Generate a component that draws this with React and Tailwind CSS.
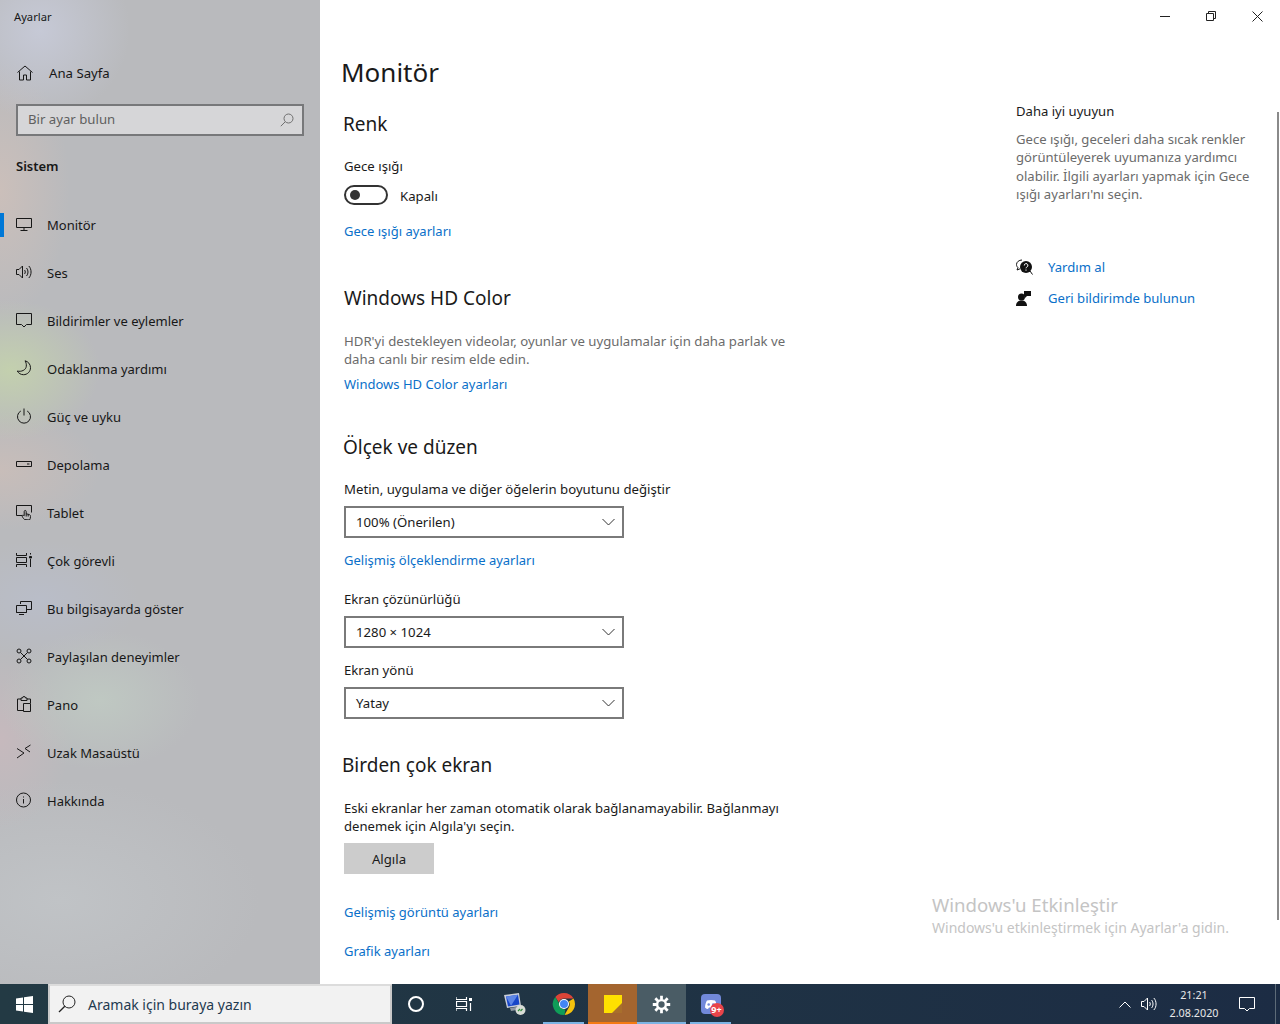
import React from 'react';

const Svg = ({ size = 16, className = '', children }) => (
  <svg width={size} height={size} viewBox="0 0 16 16" fill="none" stroke="currentColor" strokeWidth="1" className={className}>
    {children}
  </svg>
);

const navIcons = {
  monitor: (
    <Svg>
      <path d="M.5 2.500h15v9H.5zM8 11.500v3M4.500 14.500h7" />
    </Svg>
  ),
  sound: (
    <Svg>
      <path d="M.5 5.500h2.500L6.500 2v12L3 10.500H.5zM8.500 6c1 1 1 3 0 4M10.500 4c2 2 2 6 0 8M12.800 2c3 3 3 9 0 12" />
    </Svg>
  ),
  notify: (
    <Svg>
      <path d="M.5 1.500h15v11h-5L8 15l-2.500-2.500h-5z" />
    </Svg>
  ),
  moon: (
    <Svg>
      <path d="M9 .8c3 .6 5.500 3.400 5.500 6.900 0 4-3.200 7-7 7-2.700 0-5-1.400-6.200-3.700 4 1.100 8.700-.9 9-4.800.2-2-.2-3.800-1.300-5.400z" />
    </Svg>
  ),
  power: (
    <Svg>
      <path d="M8 .5v7M4.800 3a6.500 6.500 0 1 0 6.400 0" />
    </Svg>
  ),
  storage: (
    <Svg>
      <path d="M.5 5.500h15v5H.5z" />
      <path d="M11 8h2.500" />
    </Svg>
  ),
  tablet: (
    <Svg>
      <path d="M6 11.500H.5v-10h15v7" />
      <path d="M8.500 15.500c-1-1-2.300-2.500-2.300-3.500s1-1 2-.2V7.500c0-1.400 2-1.400 2 0v2.300l3 .7c1 .3 1.300 1 1.300 2 0 1.500-.3 2.500-1 3.500zM10.200 9.500v3M12.200 10.200v2.300" />
    </Svg>
  ),
  multi: (
    <Svg>
      <path d="M.5 1v2.500h10V1M.5 5.500h10v5H.5zM.5 15v-2.500h10V15M14.500 1v1.500M14.500 7v8" />
      <path d="M13.500 4.500h2v1.500h-2z" fill="currentColor" />
    </Svg>
  ),
  project: (
    <Svg>
      <path d="M4.500 4V1.500h11v8H11M.5 5.500h10v7H.5zM.5 12.500h10M3 14.500h5" />
    </Svg>
  ),
  shared: (
    <Svg>
      <circle cx="3" cy="3" r="2" />
      <circle cx="13" cy="3" r="2" />
      <circle cx="3" cy="13" r="2" />
      <circle cx="13" cy="13" r="2" />
      <path d="M4.500 4.500l7 7M11.500 4.500l-7 7" />
    </Svg>
  ),
  clipboard: (
    <Svg>
      <path d="M5 3H1.500v11.500H7M11 3h3.500v4M5 4.500V2h1.500a1.500 1.500 0 0 1 3 0H11v2.500zM7.500 7.500h7v8h-7z" />
    </Svg>
  ),
  remote: (
    <Svg>
      <path d="M1 4.500l7 4.500-7 5M14.500 1L9 4.500l5 3.500" />
    </Svg>
  ),
  info: (
    <Svg>
      <circle cx="7.500" cy="8" r="7" />
      <path d="M7.500 7v4.500M7.500 4.500v1" />
    </Svg>
  ),
};

const navItems = [
  ['monitor', 'Monitör'],
  ['sound', 'Ses'],
  ['notify', 'Bildirimler ve eylemler'],
  ['moon', 'Odaklanma yardımı'],
  ['power', 'Güç ve uyku'],
  ['storage', 'Depolama'],
  ['tablet', 'Tablet'],
  ['multi', 'Çok görevli'],
  ['project', 'Bu bilgisayarda göster'],
  ['shared', 'Paylaşılan deneyimler'],
  ['clipboard', 'Pano'],
  ['remote', 'Uzak Masaüstü'],
  ['info', 'Hakkında'],
];

function Sidebar() {
  return (
    <aside className="w-[320px] shrink-0 text-[#171717] bg-[#b9babd] bg-[radial-gradient(circle_at_40px_30px,#c6c9d6_0,transparent_90px),radial-gradient(ellipse_70px_130px_at_0px_190px,#cbbfba_0,transparent_100%),radial-gradient(ellipse_90px_70px_at_10px_370px,#c3d0ae_0,transparent_100%),radial-gradient(ellipse_100px_60px_at_0px_470px,#c8bdb9_0,transparent_100%),radial-gradient(ellipse_100px_60px_at_40px_600px,#b9bdc8_0,transparent_100%),radial-gradient(ellipse_100px_70px_at_100px_700px,#bfc8c2_0,transparent_100%),radial-gradient(ellipse_70px_90px_at_0px_740px,#c6b9bd_0,transparent_100%),radial-gradient(ellipse_200px_120px_at_60px_900px,#c0c3c6_0,transparent_100%)]">
      <div className="h-8 pl-[14px] pt-[7px] text-[11.2px] leading-[20px]">Ayarlar</div>
      <div className="mt-[17px] h-12 flex items-center">
        <svg width="16" height="16" viewBox="0 0 16 16" fill="none" stroke="currentColor" className="ml-[17px]">
          <path d="M.5 7.500L8 1l7.500 6.500M2.500 6.500v8.500H6.500v-5h3v5h4V6.500" />
        </svg>
        <span className="ml-4 mt-[2px] text-[13.2px]">Ana Sayfa</span>
      </div>
      <div className="mt-[7px] mx-4 h-8 border-2 border-[#77787a] bg-[#d6d6d8] flex items-center pl-[10px] pr-2 text-[13.2px] text-[#5f5f5f]">
        <span className="flex-1">Bir ayar bulun</span>
        <svg width="14" height="14" viewBox="0 0 14 14" fill="none" stroke="#6f6f6f">
          <circle cx="8.500" cy="5.500" r="4.500" />
          <path d="M5.200 8.800L.8 13.200" />
        </svg>
      </div>
      <div className="mt-5 ml-4 h-5 leading-[20px] text-[13px] font-semibold">Sistem</div>
      <nav className="mt-[25px]">
        {navItems.map(([icon, label], i) => (
          <div key={label} className="h-12 flex items-center relative pl-4">
            {i === 0 && <div className="absolute left-0 top-3 h-6 w-1 bg-[#0078d7]" />}
            <span className="w-[31px] -mt-[3px] shrink-0">{navIcons[icon]}</span>
            <span className="mt-[2px] text-[13px]">{label}</span>
          </div>
        ))}
      </nav>
    </aside>
  );
}

const Label = ({ children, className = '' }) => (
  <div className={`leading-[20px] text-[13.2px] text-[#1a1a1a] ${className}`}>{children}</div>
);

const Link = ({ children, className = '' }) => (
  <div className={`leading-[20px] text-[13px] text-[#0a70c9] ${className}`}>{children}</div>
);

const Heading = ({ children, className = '' }) => (
  <h2 className={`text-[19px] leading-[28px] text-[#1a1a1a] ${className}`}>{children}</h2>
);

const Select = ({ value, className = '' }) => (
  <div className={`w-[280px] h-8 border-2 border-[#7a7a7a] flex items-center justify-between pl-[10px] pr-[9px] text-[13.2px] text-[#1a1a1a] ${className}`}>
    <span className="mt-[2px]">{value}</span>
    <svg width="13" height="8" viewBox="0 0 13 8" fill="none" stroke="#333" className="mr-[-2px]">
      <path d="M.5 1l6 6 6-6" />
    </svg>
  </div>
);

function Content() {
  return (
    <div className="w-[696px] shrink-0 pl-6 pt-5">
      <h1 className="-ml-[3px] text-[26px] leading-[40px] text-[#1a1a1a]">Monitör</h1>

      <Heading className="mt-[18px] -ml-[1px]">Renk</Heading>
      <Label className="mt-[18px]">Gece ışığı</Label>
      <div className="mt-[9px] h-5 flex items-center">
        <div className="w-11 h-5 rounded-full border-2 border-[#333] flex items-center pl-[4px]">
          <div className="w-[10px] h-[10px] rounded-full bg-[#333]" />
        </div>
        <span className="ml-3 mt-1 text-[13.2px] text-[#1a1a1a]">Kapalı</span>
      </div>
      <Link className="mt-4">Gece ışığı ayarları</Link>

      <Heading className="mt-[43px]">Windows HD Color</Heading>
      <p className="mt-5 w-[470px] text-[13.2px] leading-[18px] text-[#6b6b6b]">
        HDR'yi destekleyen videolar, oyunlar ve uygulamalar için daha parlak ve daha canlı bir resim elde edin.
      </p>
      <Link className="mt-[6px]">Windows HD Color ayarları</Link>

      <Heading className="mt-[39px] -ml-[1px]">Ölçek ve düzen</Heading>
      <Label className="mt-[18px]">Metin, uygulama ve diğer öğelerin boyutunu değiştir</Label>
      <Select value="100% (Önerilen)" className="mt-[7px]" />
      <Link className="mt-3">Gelişmiş ölçeklendirme ayarları</Link>
      <Label className="mt-[19px]">Ekran çözünürlüğü</Label>
      <Select value="1280 × 1024" className="mt-[7px]" />
      <Label className="mt-3">Ekran yönü</Label>
      <Select value="Yatay" className="mt-[7px]" />

      <Heading className="mt-8 -ml-[2px]">Birden çok ekran</Heading>
      <p className="mt-5 w-[470px] text-[13.1px] leading-[18px] text-[#1a1a1a]">
        Eski ekranlar her zaman otomatik olarak bağlanamayabilir. Bağlanmayı denemek için Algıla'yı seçin.
      </p>
      <button className="mt-2 block w-[90px] h-[31px] pt-[3px] bg-[#cccccc] text-[13.2px] text-[#1a1a1a]">Algıla</button>
      <Link className="mt-7">Gelişmiş görüntü ayarları</Link>
      <Link className="mt-[19px]">Grafik ayarları</Link>
    </div>
  );
}

function Aside() {
  return (
    <div className="flex-1 pt-[69px] text-[13.1px]">
      <div className="leading-[20px] text-[#1a1a1a]">Daha iyi uyuyun</div>
      <p className="mt-[9px] w-[245px] leading-[18.33px] text-[#6b6b6b]">
        Gece ışığı, geceleri daha sıcak renkler görüntüleyerek uyumanıza yardımcı olabilir. İlgili ayarları yapmak için Gece ışığı ayarları'nı seçin.
      </p>
      <div className="mt-[54px] h-5 flex items-center">
        <svg width="17" height="17" viewBox="0 0 17 17" className="shrink-0">
          <path d="M6 1C3 1 .5 3 .5 5.500c0 1.300.6 2.400 1.500 3.200L1 11l3-1.200" fill="none" stroke="#111" />
          <circle cx="10" cy="8" r="6" fill="#111" />
          <path d="M14 12l2.500 3.500" stroke="#111" />
          <path d="M8.300 6.500a1.800 1.800 0 1 1 2.600 1.500c-.6.3-.9.700-.9 1.300M10 10.500v1.200" fill="none" stroke="#fff" />
        </svg>
        <span className="ml-[15px] mt-[1px] text-[#0a70c9]">Yardım al</span>
      </div>
      <div className="mt-[11px] h-5 flex items-center">
        <svg width="17" height="17" viewBox="0 0 17 17" className="shrink-0" fill="#111">
          <circle cx="5.500" cy="7" r="3.500" />
          <path d="M0 16c0-3.500 2.200-5.500 5.500-5.500S11 12.500 11 16z" />
          <path d="M8 1h7v5h-4l-2 2V6H8z" />
        </svg>
        <span className="ml-[15px] mt-[1px] text-[#0a70c9]">Geri bildirimde bulunun</span>
      </div>
    </div>
  );
}

const Underline = ({ className = '' }) => <div className={`absolute bottom-0 h-[2px] ${className}`} />;

function TaskButton({ className = '', line = '', children }) {
  return (
    <div className={`w-[49px] h-10 relative flex items-center justify-center shrink-0 ${className}`}>
      {children}
      {line && <Underline className={line} />}
    </div>
  );
}

function Taskbar() {
  return (
    <footer className="h-10 shrink-0 flex items-center bg-linear-to-r from-[#233a44] to-[#1c2c44] text-white">
      <div className="w-12 h-10 flex items-center justify-center shrink-0">
        <svg width="17" height="17" viewBox="0 0 17 17" fill="#fff">
          <path d="M0 2.400l7-1v6.600H0zM8 1.300L17 0v8H8zM0 9h7v6.600l-7-1zM8 9h9v8l-9-1.300z" />
        </svg>
      </div>
      <div className="w-[344px] h-10 bg-[#f2f2f2] border-t-2 border-x-2 border-b-2 border-[#c9c9c9] border-t-[#dcdcdc] flex items-center text-[#1f3a50]">
        <svg width="18" height="18" viewBox="0 0 18 18" fill="none" stroke="#222" className="ml-2">
          <circle cx="11" cy="7" r="6" />
          <path d="M6.800 11.200L1 17" strokeWidth="1.300" />
        </svg>
        <span className="ml-3 text-[14px]">Aramak için buraya yazın</span>
      </div>
      <div className="w-12 h-10 flex items-center justify-center shrink-0">
        <div className="w-4 h-4 rounded-full border-2 border-white" />
      </div>
      <div className="w-12 h-10 flex items-center justify-center shrink-0">
        <svg width="16" height="16" viewBox="0 0 16 16" fill="none" stroke="#fff" strokeWidth="1.200">
          <path d="M0 1v2.500h10.500V1M.5 5.500h10v5H.5zM0 15v-2.500h10.500V15M14.500 7v8" />
          <path d="M13 2h3v3h-3z" fill="#fff" stroke="none" />
        </svg>
      </div>
      <div className="w-[2px] shrink-0" />
      <TaskButton>
        <svg width="24" height="24" viewBox="0 0 24 24">
          <path d="M1 3l15-2 2 13-14 2z" fill="#c9ced8" />
          <path d="M3 4.500l12-1.700 1.500 9.800L5 14.400z" fill="#1746c8" />
          <path d="M3 4.500l12-1.700-7 11z" fill="#5d86e6" />
          <path d="M7 16l6-1 1 3-6 1z" fill="#8f97a3" />
          <circle cx="17.500" cy="18" r="5" fill="#d8dcd6" />
          <path d="M15 19l2-2M17.500 19l2-2" stroke="#2f8a3a" strokeWidth="1.200" />
        </svg>
      </TaskButton>
      <TaskButton line="left-1 right-1 bg-[#7cb4e4]">
        <svg width="24" height="24" viewBox="0 0 24 24">
          <path d="M12 1a11 11 0 0 1 9.530 5.500H12a5.500 5.500 0 0 0-5.200 3.700L3.300 5A11 11 0 0 1 12 1z" fill="#db4437" />
          <path d="M21.530 6.500A11 11 0 0 1 12.500 23l4.300-7.500a5.500 5.500 0 0 0 0-6z" fill="#f4c20d" />
          <path d="M12.500 23A11 11 0 0 1 3.300 5l4.500 7.800a5.500 5.500 0 0 0 5.500 4.600z" fill="#0f9d58" />
          <circle cx="12" cy="12" r="5" fill="#fff" />
          <circle cx="12" cy="12" r="4" fill="#4285f4" />
        </svg>
      </TaskButton>
      <TaskButton className="bg-[#a4652f]" line="left-0 right-0 bg-[#f47a12]">
        <svg width="18" height="18" viewBox="0 0 18 18">
          <path d="M0 0h18v18H0z" fill="#ffe000" />
          <path d="M18 8v10H8z" fill="#a86f2c" />
        </svg>
      </TaskButton>
      <TaskButton className="bg-[#4a5c65]" line="left-0 right-0 bg-[#7cb4e4]">
        <svg width="19" height="19" viewBox="0 0 24 24" fill="none" stroke="#fff" strokeWidth="3">
          <circle cx="12" cy="12" r="5.500" />
          <path d="M12 1v5M12 18v5M1 12h5M18 12h5M4.200 4.200l3.600 3.600M16.200 16.200l3.600 3.600M4.200 19.800l3.600-3.600M16.200 7.800l3.600-3.600" strokeWidth="3.500" />
        </svg>
      </TaskButton>
      <TaskButton line="left-1 right-1 bg-[#7cb4e4]">
        <div className="relative w-[24px] h-[24px] ml-1 mt-[3px]">
          <svg width="20" height="20" viewBox="0 0 20 20">
            <rect width="20" height="20" rx="4" fill="#7289da" />
            <path d="M4 13.500c.2-3 1-5.500 2-7 2-.8 6-.8 8 0 1 1.500 1.800 4 2 7-1 1-2 1.500-3 1.500l-1-1.500h-4L7 15c-1 0-2-.5-3-1.500z" fill="#fff" />
            <circle cx="7.700" cy="10.500" r="1.300" fill="#7289da" />
            <circle cx="12.300" cy="10.500" r="1.300" fill="#7289da" />
          </svg>
          <span className="absolute left-[9px] top-[9px] w-[14px] h-[14px] rounded-full bg-[#e8444a] text-[9px] font-bold leading-[14px] text-center text-white">9+</span>
        </div>
      </TaskButton>
      <div className="ml-auto flex items-center h-10 text-[#e8e8e8]">
        <svg width="12" height="7" viewBox="0 0 12 7" fill="none" stroke="#fff">
          <path d="M.5 6.500L6 1l5.500 5.500" />
        </svg>
        <svg width="16" height="16" viewBox="0 0 16 16" fill="none" stroke="#fff" className="ml-[10px]">
          <path d="M.5 5.500h2.500L6.500 2v12L3 10.500H.5zM8.500 6c1 1 1 3 0 4M10.500 4c2 2 2 6 0 8M12.800 2c3 3 3 9 0 12" />
        </svg>
        <div className="w-[72px] ml-[1px] text-center text-[10.8px] leading-[18px]">
          <div>21:21</div>
          <div>2.08.2020</div>
        </div>
        <svg width="16" height="16" viewBox="0 0 16 16" fill="none" stroke="#fff" className="ml-[9px]">
          <path d="M.5 1.500h15v11h-5L8 15l-2.500-2.500h-5z" />
        </svg>
        <div className="ml-5 w-[1px] h-10 bg-[#5d6b78] mr-1" />
      </div>
    </footer>
  );
}

export default function App() {
  return (
    <div className="h-[1024px] flex flex-col overflow-hidden font-['Noto_Sans',sans-serif] bg-white">
      <div className="flex flex-1 min-h-0">
        <Sidebar />
        <main className="flex-1 flex flex-col relative">
          <div className="h-8 shrink-0 flex justify-end">
            <div className="w-[46px] flex items-center justify-center">
              <svg width="10" height="10" viewBox="0 0 10 10" stroke="#222"><path d="M0 5.500h10" /></svg>
            </div>
            <div className="w-[46px] flex items-center justify-center">
              <svg width="10" height="10" viewBox="0 0 10 10" fill="none" stroke="#222"><path d="M.5 2.500h7v7h-7zM2.500 2.500v-2h7v7h-2" /></svg>
            </div>
            <div className="w-[46px] flex items-center justify-center">
              <svg width="11" height="11" viewBox="0 0 11 11" fill="none" stroke="#222"><path d="M.5.500l10 10M10.500.500l-10 10" /></svg>
            </div>
          </div>
          <div className="flex flex-1 min-h-0">
            <Content />
            <Aside />
          </div>
          <div className="absolute right-[1px] top-[112px] h-[808px] w-[2px] bg-[#8a8a8a]" />
          <div className="absolute left-[612px] top-[892px] text-[#c4c4c4]">
            <div className="text-[18.6px] leading-[26px]">Windows'u Etkinleştir</div>
            <div className="text-[14px] leading-[18px] mt-[1px]">Windows'u etkinleştirmek için Ayarlar'a gidin.</div>
          </div>
        </main>
      </div>
      <Taskbar />
    </div>
  );
}
